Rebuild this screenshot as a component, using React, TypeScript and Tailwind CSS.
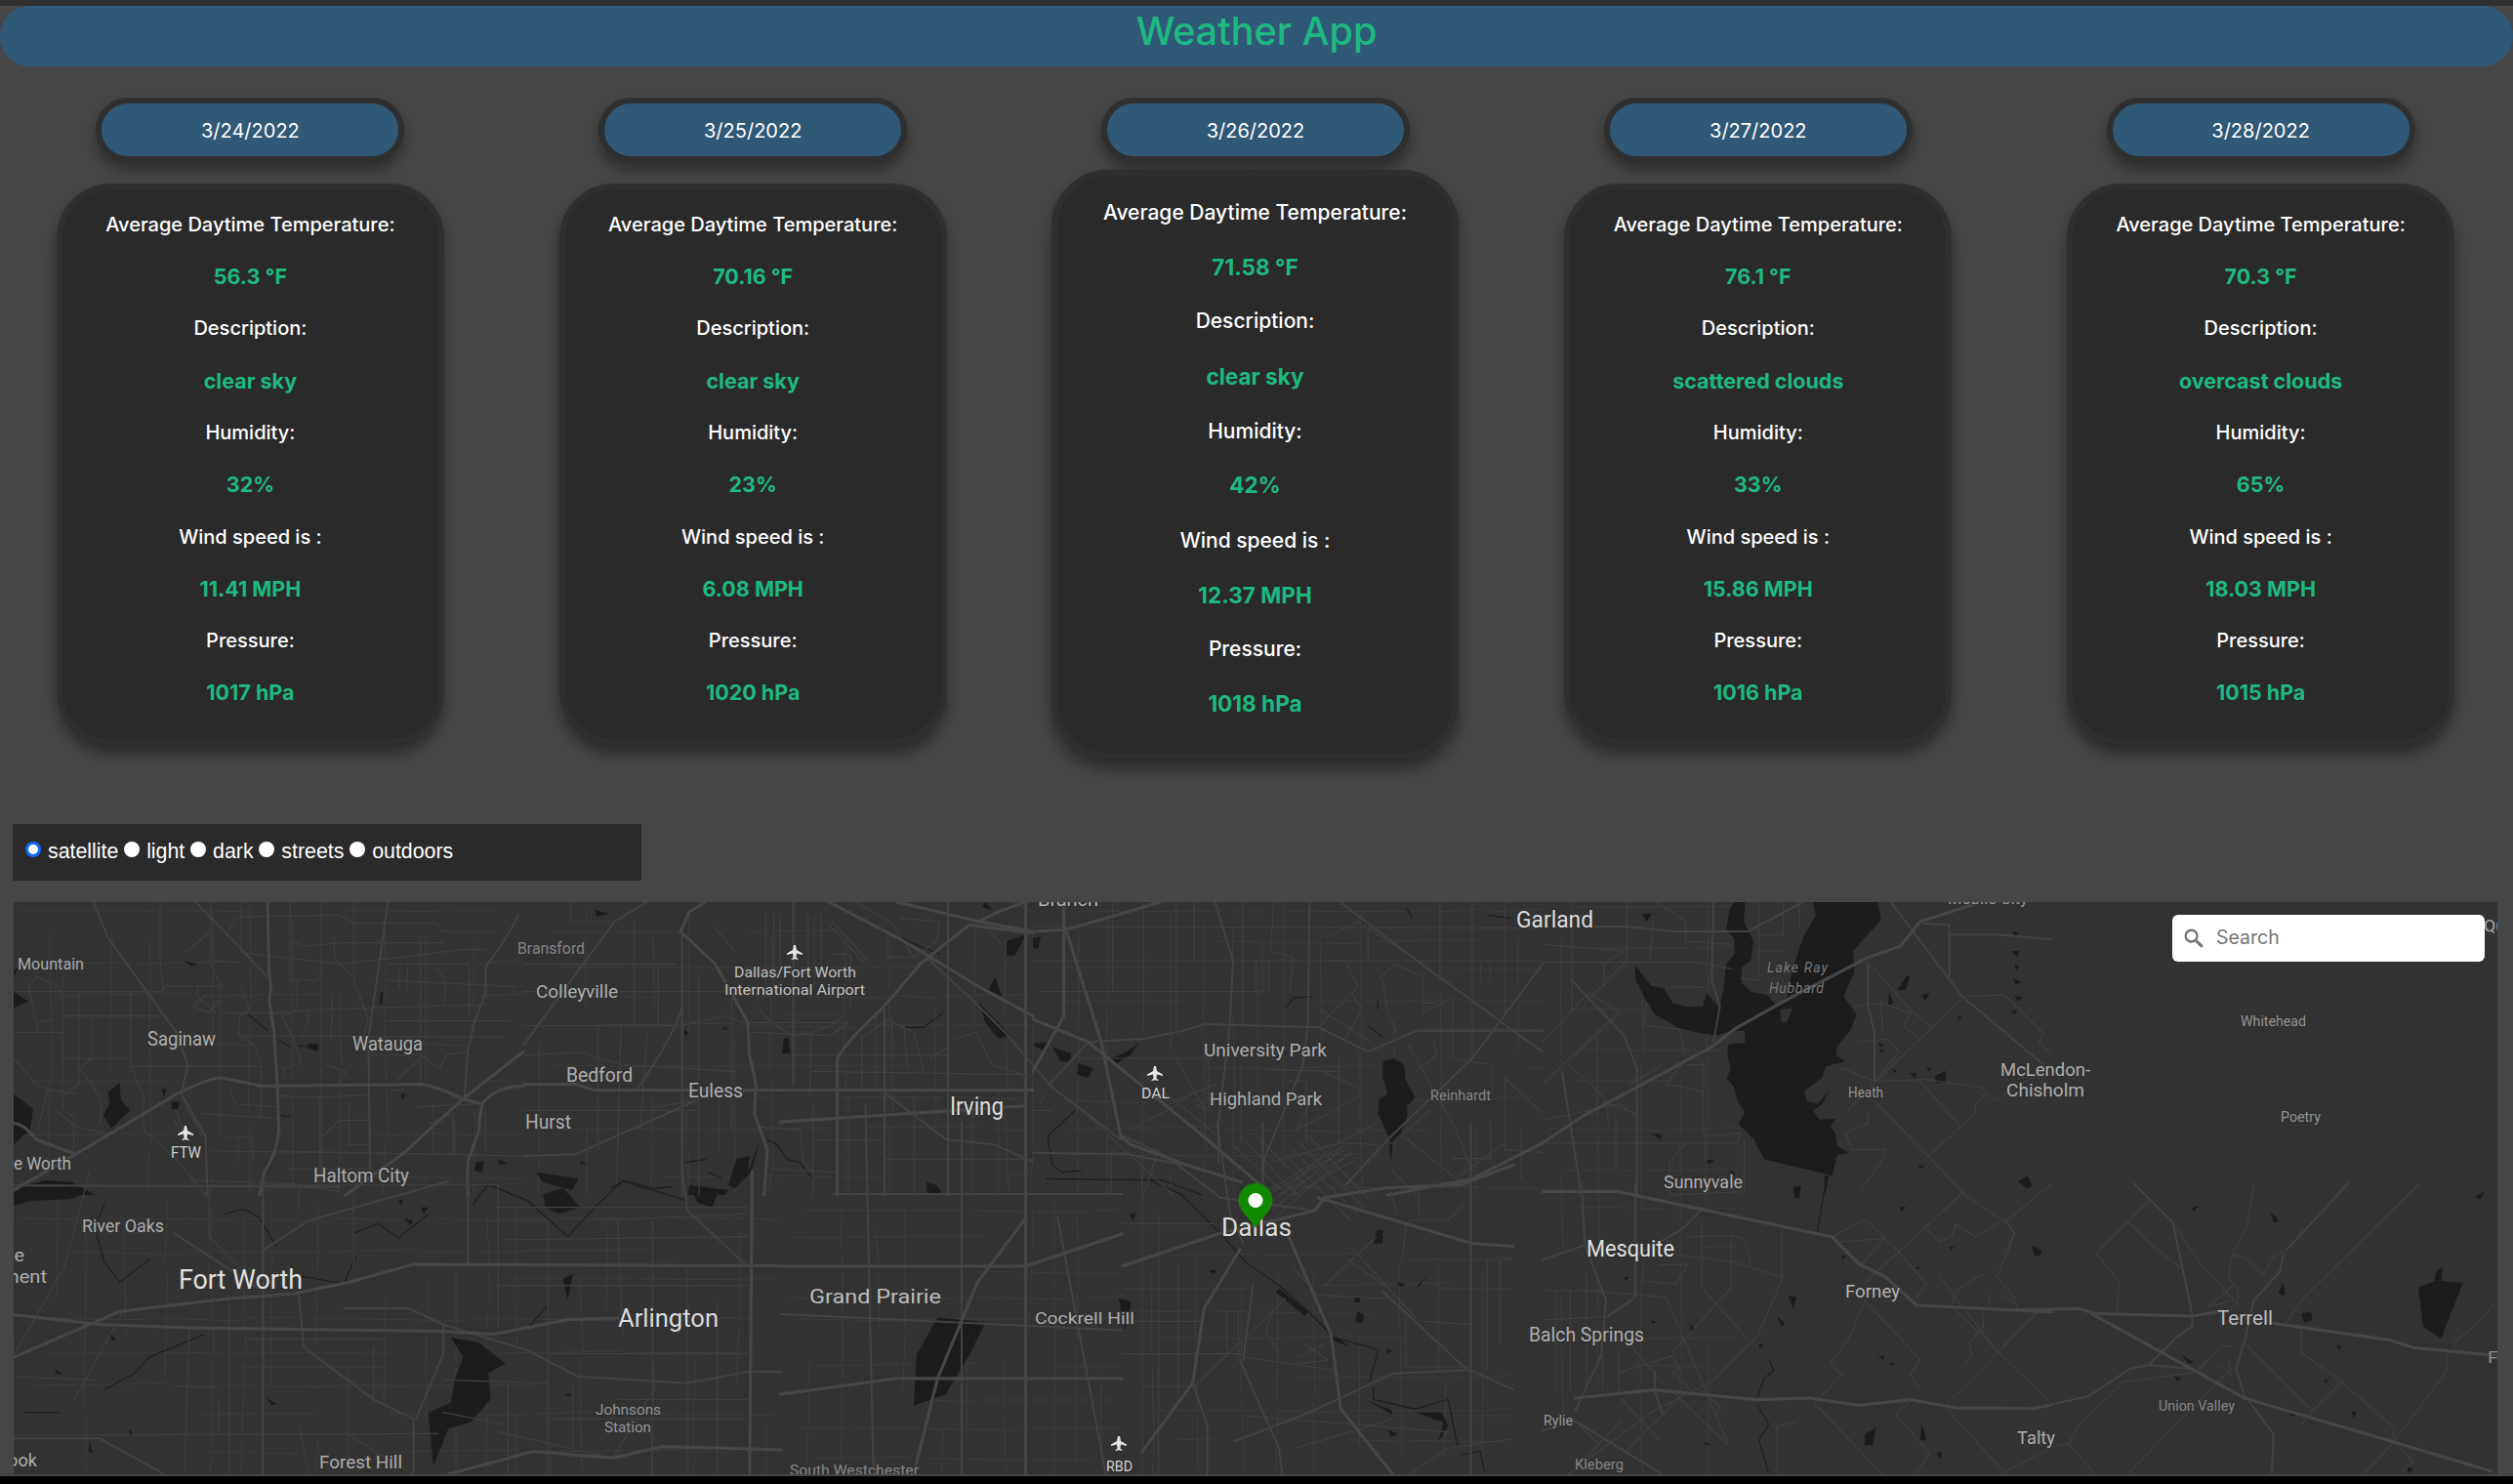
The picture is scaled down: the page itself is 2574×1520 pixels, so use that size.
import React from "react";

type Day = { date: string; temp: string; desc: string; hum: string; wind: string; pres: string };
const days: Day[] = [
  { date: "3/24/2022", temp: "56.3 °F", desc: "clear sky", hum: "32%", wind: "11.41 MPH", pres: "1017 hPa" },
  { date: "3/25/2022", temp: "70.16 °F", desc: "clear sky", hum: "23%", wind: "6.08 MPH", pres: "1020 hPa" },
  { date: "3/26/2022", temp: "71.58 °F", desc: "clear sky", hum: "42%", wind: "12.37 MPH", pres: "1018 hPa" },
  { date: "3/27/2022", temp: "76.1 °F", desc: "scattered clouds", hum: "33%", wind: "15.86 MPH", pres: "1016 hPa" },
  { date: "3/28/2022", temp: "70.3 °F", desc: "overcast clouds", hum: "65%", wind: "18.03 MPH", pres: "1015 hPa" },
];

function Row({ text, value }: { text: string; value?: boolean }) {
  return value ? (
    <div className="flex h-[53.33px] shrink-0 items-center justify-center text-[21.5px] font-bold text-[#1eb981]">{text}</div>
  ) : (
    <div className="flex h-[53.33px] shrink-0 items-center justify-center text-[20px] font-medium text-white">{text}</div>
  );
}

function Column({ d, active }: { d: Day; active: boolean }) {
  const card =
    "h-[575px] w-[397px] rounded-[56px] border-[6px] border-[#2f2f2f] bg-[#2a2a2a] pt-[9px] shadow-[0_9px_14px_rgba(0,0,0,0.4)]";
  return (
    <div className="flex flex-col items-center">
      <div className="flex h-[66px] w-[316px] items-center justify-center rounded-full border-[6px] border-[#2f2f2f] bg-[#305877] pt-[2px] text-[20px] font-normal text-white shadow-[0_8px_14px_rgba(0,0,0,0.35)]">
        {d.date}
      </div>
      <div className={active ? card + " mt-[22px] scale-[1.05]" : card + " mt-[22px]"}>
        <Row text="Average Daytime Temperature:" />
        <Row text={d.temp} value />
        <Row text="Description:" />
        <Row text={d.desc} value />
        <Row text="Humidity:" />
        <Row text={d.hum} value />
        <Row text="Wind speed is :" />
        <Row text={d.wind} value />
        <Row text="Pressure:" />
        <Row text={d.pres} value />
      </div>
    </div>
  );
}

type Layer = { o: [number, number]; s: [number, number]; maj?: string[]; mid?: string[]; min?: string[]; riv?: string[]; wat?: string[] };

const layers: Layer[] = [
  {
    o: [0, 0], s: [1.6416, 1.6416],
    maj: ["M487 790 L640 790 L700 770", "M487 700 L640 690", "M640 560 L640 920", "M570 920 L585 860 L610 800 L640 760", "M487 870 L560 860 L700 860"],
    mid: ["M520 745 L700 745", "M540 690 L545 920", "M600 700 L600 920", "M487 820 L700 830", "M660 760 L690 920"],
    wat: ["M585 822 L615 825 L605 845 L590 870 L570 877 L572 845 Z", "M698 810 L706 812 L702 830 Z"],
  },
  {
    o: [14, 924], s: [1 / 3, 1 / 3],
    maj: ["M780 0 L785 220 Q795 260 785 300 L800 400 L810 560 L815 700 Q810 770 770 830 L755 900", "M0 885 L190 775 L500 590 Q600 540 640 540 L760 565 L1250 560 Q1300 565 1380 605 L1440 620 Q1430 660 1430 700 L1395 800 L1395 900", "M1566 565 Q1480 565 1440 620", "M1566 460 L1380 605 L1200 770 L1020 900", "M0 680 Q30 680 70 730 L190 775"],
    mid: ["M560 0 L700 145 L780 230", "M1150 0 L1090 420 L1095 820", "M245 0 L290 110 L500 400 L535 500 L515 590 L590 720 L595 900", "M1550 40 Q1530 90 1450 200 L1450 280 L1415 370 L1395 460 L1385 605", "M0 870 L1000 875"],
    min: ["M150 220 L150 640 L185 660 L185 760", "M0 275 L450 275 L470 258 L635 258 L635 710", "M150 350 L450 350", "M360 280 L360 505 L400 600 L400 700 L500 790 L590 900", "M0 400 L150 400 L150 480 L360 480", "M240 350 L240 480 L200 510 L240 560 L270 610 L265 680", "M200 280 L200 560 L155 590", "M360 505 L760 505 L760 660", "M0 480 L70 560 L105 575 L190 590", "M105 575 L75 700", "M130 640 L190 690 L280 710", "M580 650 L810 665", "M635 340 L810 340 L940 330 L1100 325 L1450 315", "M700 260 L725 330 L695 350 L690 410 L740 440 L760 500", "M690 410 L1500 415", "M600 180 L640 260", "M605 0 L605 180 L700 185", "M600 95 L525 155", "M450 0 L450 180 L460 270", "M685 45 L660 90 M685 45 L1000 40 L1050 65 L1300 65 L1315 90 L1480 90", "M700 0 L700 155 L1000 190 L1190 170 L1380 145 L1450 145", "M850 0 L850 240 L935 240 L945 210 M850 120 L900 135 L1000 125 L1320 125", "M945 0 L945 880", "M1045 0 L1045 240 L1090 360 L1070 430 M985 100 L985 170 L1040 230", "M1150 190 L1400 190 L1400 350 M1150 240 L1545 260 M1185 195 L1185 265 M1210 195 L1210 270 M1250 100 L1250 570 M1300 200 L1325 240 L1325 315", "M1150 365 L1520 365", "M870 240 L870 330 L825 350 L860 420 L885 495 L830 510 L830 540", "M980 280 L975 420 M905 330 L905 370 L880 415", "M820 595 L890 600 L1045 595 L1090 590", "M940 600 L940 880 M1030 615 L1030 745 L1095 745", "M660 560 L680 620 L810 630", "M655 720 L735 720 L735 800 M690 720 L690 800 M610 765 L1400 775", "M1095 470 L1250 470 L1310 510 L1330 470 L1390 460", "M1180 545 L1250 480", "M1230 630 L1420 620 M1290 620 L1290 770", "M810 765 L1560 780", "M940 730 L1000 670 L1095 670 L1095 745", "M840 820 L1100 820", "M545 855 L850 865 L1000 890", "M45 260 L70 230 L130 255 L150 280 M45 260 L60 330 L75 395 M75 370 L125 358", "M565 260 L565 290 L620 340 M550 320 L590 285 M635 300 L600 340 L550 320", "M500 640 L525 720 M530 630 L580 720 M495 670 L520 740", "M960 500 L1020 520 L1000 560 M1200 575 L1160 580 M1280 680 L1350 650 L1350 770 M1355 675 L1355 770 M1450 640 L1450 760"],
    riv: ["M720 345 L780 395 M815 425 L850 445 M875 440 L930 450 M820 655 L850 660"],
    wat: ["M0 210 L15 200 L0 232Z", "M0 275 L45 305 L0 325Z", "M0 590 L60 635 L50 700 L0 745Z", "M290 585 L325 555 L330 610 L358 640 L300 695 L275 655 L295 620Z", "M520 180 L565 190 L545 195Z", "M455 575 L470 572 L462 598Z", "M485 615 L510 612 L505 635 L485 635Z", "M1128 280 L1136 275 L1130 318 L1124 310Z", "M1190 590 L1205 588 L1195 608Z", "M0 880 L100 855 L180 860 L250 900 L0 900Z", "M1420 800 L1445 795 L1440 830 L1415 825Z", "M1490 790 L1520 805 L1490 805Z", "M905 435 L935 435 L935 458 L905 450Z"],
  },
  {
    o: [536, 924], s: [1 / 3, 1 / 3],
    maj: ["M483 90 L590 190 L690 370 L695 470 L715 560 L710 650 L750 760 L740 900", "M483 90 L510 30 L560 0", "M0 560 L160 560 L220 578 L690 578 L800 578 L1566 578", "M965 900 L965 480 Q990 430 1100 330 L1220 190 L1370 70 L1566 95", "M940 0 L1170 120 L1400 260 L1566 350", "M1150 0 L1400 60 L1566 90 M1400 60 L1460 30 L1540 0"],
    mid: ["M1240 170 L1390 310 L1480 400 L1566 500", "M830 0 L830 560", "M0 780 L160 775 L530 610", "M0 440 L280 60 L380 0", "M488 320 Q470 400 350 575", "M488 100 L488 900", "M1110 330 L1110 900", "M1305 0 L1305 900", "M1110 585 L1300 730 L1450 745 L1566 800"],
    min: ["M0 190 L470 190 M0 275 L620 275 M0 380 L480 380 L620 350 L690 375 M0 470 L180 462 L300 500 L650 520", "M145 0 L145 60 L280 60 M230 380 L230 760 M340 50 L340 370 M300 380 L290 760 M415 190 L415 380 M400 630 L540 610", "M540 220 L540 900 M640 300 L640 700 M600 580 L600 760 M380 400 L360 700 M0 640 L540 640", "M680 370 L850 370 L1000 370 L940 410 L700 400 M885 410 L880 590 M960 400 L1000 370", "M830 470 L1300 470 M890 520 L1566 530 M890 620 L890 900 M1000 590 L1000 900 M1200 590 L1200 900 M1050 690 L1400 690 M1380 600 L1380 900 M1460 580 L1460 900 M1110 790 L1566 790 M890 730 L1100 730", "M720 690 L850 700 L860 800 L890 830 M760 820 L960 830", "M1040 420 L1120 360 L1200 400 L1230 520 M1040 410 L1040 560 M1085 350 L1085 570 M1130 350 L1140 480 M1170 380 L1180 510 M1250 480 L1310 440", "M1120 100 L1120 170 L1200 170 L1130 60 L1020 0 M1160 50 L1280 60 L1270 120 L1200 170", "M1330 420 L1390 400 L1440 500 L1566 540 M1500 0 L1566 30 M1430 90 L1470 130", "M745 40 L745 260 M770 40 L770 260 M790 40 L790 230 M875 40 L875 230 M895 40 L895 260 M915 40 L915 230", "M585 75 L650 150 M955 160 L1005 160 L1005 320 M950 60 L1060 180 M940 70 L1050 190", "M720 320 Q750 370 830 410 Q930 400 980 350 M800 345 L960 345"],
    riv: ["M750 730 L780 745 L810 790 L850 800 L890 850", "M270 880 L310 855 L400 880 L460 875", "M1150 100 L1180 120 L1280 160", "M1170 385 L1230 385 L1290 340", "M500 800 L560 790", "M570 830 L610 850"],
    wat: ["M655 790 L695 780 L690 830 L725 740 L700 830 L650 880 L630 870Z", "M510 870 L630 885 L620 900 L505 900Z", "M1400 310 L1460 370 L1495 410 L1460 420 L1420 370Z", "M1485 120 L1545 100 L1510 165 L1485 165Z", "M800 420 L815 415 L820 465 L795 465Z", "M1240 860 L1270 870 L1290 900 L1240 900Z", "M40 830 L170 850 L150 885 L60 860Z", "M220 25 L265 35 L225 45Z", "M495 390 L510 405 L495 410Z", "M615 382 L630 392 L612 390Z", "M1420 0 L1440 25 L1410 15Z", "M1450 230 L1470 290 L1430 270Z", "M175 795 L195 805 L175 805Z"],
  },
  {
    o: [1058, 924], s: [1 / 3, 1 / 3],
    maj: ["M95 0 L95 350 L0 520", "M0 90 L100 85 L240 45 L390 0", "M100 80 L210 430 L270 720 L300 745 L480 810 L640 860", "M0 360 L170 430 L500 700 L700 870", "M1566 740 L1350 850 L1090 900"],
    mid: ["M0 500 L60 570 L270 730", "M170 430 L50 560", "M170 430 L340 420 L460 395 L530 375 L880 385 L1030 460 L1180 395 L1566 395", "M560 0 L615 180 L605 380 L570 680 L570 800", "M945 0 L1180 180 L1400 340 L1566 460", "M850 0 L845 380 L830 500 L710 790 L705 870", "M1566 190 L1350 480 L1100 720 L960 870", "M0 770 L290 775 L480 810"],
    min: ["M0 75 L1566 80 M0 180 L1566 180 M20 275 L700 275 M140 480 L550 480 M440 0 L440 400 M340 0 L340 390 M245 0 L245 270 M140 100 L140 350 M495 0 L495 180", "M645 0 L645 380 M685 180 L685 280 M705 130 L705 280 M725 180 L725 280 M740 0 L730 150 L800 170 L790 270", "M900 110 L1000 60 L1150 160 M900 180 L960 180 L1000 260 L880 380 M980 280 L1010 330 L960 420 M880 330 L1040 430 M1030 80 L1030 190", "M1060 240 L1110 190 L1200 230 L1200 340 L1280 300 M1075 240 L1090 340 L1120 400 M1350 0 L1350 480 M1450 0 L1450 350 M1250 0 L1250 230 M1375 190 L1375 240 M1405 190 L1405 240 M1200 310 L1240 310", "M1290 300 L1290 480 L1410 500 L1410 600 M1150 430 L1300 700 L1350 830 M1230 420 L1240 470 L1180 520 M1450 540 L1566 650 M1450 540 L1450 760 M1500 690 L1500 850", "M440 480 L530 640 L500 620 M540 480 L540 640 M640 500 L640 740 M720 515 L930 520 M780 550 L840 550 L840 740 M890 520 L1000 570 M940 480 L940 740 M850 620 L810 700 L1000 600", "M730 800 L940 740 L1060 745 L1050 790 M700 900 L950 750 M720 900 L960 760 M760 900 L980 770 M800 900 L1010 780 M620 750 L780 900 M650 730 L810 900 M680 710 L850 880", "M240 780 L240 900 M380 780 L340 900 M130 620 L430 900 M340 530 L570 720 M420 620 L560 560 M300 700 L450 620 M20 620 L40 590 M0 640 L60 640", "M1140 720 L1240 800 L1300 850 L1450 740 M1100 820 L1180 900 M1220 640 L1130 720 M1450 760 L1566 770"],
    riv: ["M775 325 L800 295 L860 290", "M1030 380 L1075 415", "M45 720 L130 640 M45 720 L60 810 L90 830 L150 825 M40 850 L400 855 L520 900", "M1150 20 L1165 50", "M1400 40 L1470 50", "M1060 300 L1058 330"],
    wat: ["M1075 490 L1110 480 L1140 500 L1145 545 L1175 600 L1150 625 L1150 660 L1130 710 L1100 740 L1070 670 L1060 650 L1065 605 L1090 590 L1075 540Z", "M1095 745 L1105 745 L1100 805Z", "M238 480 Q280 470 325 432 L300 470 L250 500Z", "M60 445 L115 465 L120 490 L85 490Z", "M140 495 L185 510 L170 540 L135 530Z", "M0 110 L25 105 L15 145 L0 140Z", "M0 435 L45 430 L40 460 L10 445Z"],
  },
  {
    o: [1580, 924], s: [1 / 3, 1 / 3],
    maj: ["M0 740 L120 660 L520 445 L590 390 L750 300 L1000 170 L1100 135 L1160 60 L1300 15 L1340 0"],
    mid: ["M160 75 L260 75 L400 90 L630 90 L800 0", "M525 0 L520 240 L545 320 L525 430", "M60 520 L110 840 L115 900", "M1070 0 L1290 290 L1540 500", "M1170 65 L1250 70 L1250 230 M1250 100 L1400 100 L1566 115", "M1000 190 L1000 320 L1020 400 L1020 550", "M90 240 L250 410 L290 510 L290 900"],
    min: ["M0 185 L480 185 L580 205 M90 0 L90 340 M0 130 L250 150 L190 190 L190 260 M350 0 L440 60 L440 120 L580 130 M260 0 L260 180 L130 310 M330 180 L340 60", "M610 235 L665 240 L665 0 M665 100 L740 100 L740 0 M665 150 L740 150 M790 0 L790 80 M395 260 L500 262 M0 430 L140 280 L240 340 L100 470 M0 560 L230 340 M80 500 L170 580 L200 620 L290 650", "M320 310 L310 380 L420 390 L440 480 L380 560 L490 580 L500 800 M445 500 L495 500 L495 590 M290 540 L270 560 L370 500", "M0 670 L240 620 L290 660 M195 620 L205 690 M225 670 L225 820 M0 740 L600 740 L610 710 L500 720 M390 800 L440 740 M390 800 L390 900 L620 890 L620 730", "M1015 200 L1130 330 L1190 380 M960 320 L1040 310 L1130 340 L1110 380 L1160 420 M1040 300 L1045 410 M1285 300 L1020 555 L940 640 M1000 640 L1000 680 L930 710 L950 760 L1055 760 L1040 800 L980 880", "M970 430 L1060 420 L1095 460 L1020 550 L920 510 M1030 550 L1180 545 L1350 570 L1390 610 L1566 500 M1160 550 L1280 685 M1360 590 L1330 620 L1330 650 L1185 780 M1020 610 L1300 900 M1285 290 L1420 285 L1540 405 L1525 430 L1566 470"],
    wat: ["M830 0 L1030 0 L1040 55 L990 110 L955 150 L958 215 L925 290 L965 345 L945 395 L905 445 L902 470 L930 490 L870 505 L860 540 L805 580 L812 612 L845 620 L880 580 L860 620 L832 640 L850 668 L900 665 L885 690 L900 712 L905 750 L940 770 L905 778 L890 840 L680 790 L650 730 L602 682 L622 645 L598 610 L590 570 L565 540 L578 515 L568 470 L570 438 L622 432 L620 395 L580 395 L535 410 L470 400 L415 385 L345 345 L312 290 L285 235 L285 195 L335 258 L372 265 L400 310 L445 322 L492 322 L505 280 L542 325 L555 275 L565 190 L590 160 L590 115 L565 80 L575 20 L590 0 L622 0 L618 60 L648 120 L640 180 L612 200 L612 250 L640 275 L690 285 L720 320 L750 290 L770 200 L800 110 L840 40Z", "M1120 225 L1128 230 L1115 270 L1090 270Z", "M1065 275 L1078 310 L1062 318Z", "M1165 285 L1190 280 L1175 305Z", "M1440 150 L1465 150 L1460 168Z", "M1450 190 L1465 200 L1455 208Z", "M1445 235 L1470 245 L1455 255Z", "M1450 288 L1475 292 L1460 305Z", "M1440 330 L1460 335 L1450 345Z", "M1445 88 L1465 95 L1450 105Z", "M1205 535 L1240 518 L1238 555 L1210 555Z", "M1130 525 L1150 525 L1145 545Z", "M1180 505 L1195 515 L1185 520Z", "M1075 512 L1090 518 L1080 525Z", "M1275 350 L1290 355 L1280 362Z", "M1030 435 L1050 435 L1040 445Z", "M1035 450 L1050 460 L1040 462Z", "M1460 860 L1490 840 L1505 870 L1490 880Z", "M1155 810 L1175 808 L1160 820Z", "M335 710 L365 715 L362 730Z", "M500 795 L530 790 L515 805Z", "M570 820 L590 830 L590 840Z", "M770 880 L795 875 L790 900 L775 900Z", "M305 35 L335 35 L320 60Z", "M865 840 L880 840 L868 900Z"],
  },
  {
    o: [1580, 1212], s: [1 / 3, 1 / 3],
    maj: ["M0 25 L230 25 L890 165 L975 250 L1050 285 L1150 375 L1566 395", "M100 660 L340 635 L660 665 L820 660 L970 682 L1130 665 L1270 690 L1510 692 L1566 680"],
    mid: ["M120 0 L130 190 L195 360 L180 530 L100 700", "M0 235 L130 190", "M285 0 L285 350 L200 410", "M0 760 L100 730 L370 895", "M345 580 L345 640 L370 710", "M490 80 L430 140 L290 220"],
    min: ["M735 135 L735 300 L660 470 L520 610 L340 700 L70 900 M410 220 L580 240 L740 290", "M580 160 L620 170 L640 250 M490 120 L490 320 L640 490 M580 165 L580 320 L400 520 M440 165 L580 160 M310 240 L310 300 L410 310 L445 250 L360 250 M380 350 L570 800 M130 330 L380 350 M0 330 L190 330 M0 420 L195 410", "M40 330 L40 630 M85 330 L85 630 M135 280 L135 630 M185 530 L185 630 M235 510 L235 640 M240 580 L400 530 L420 570 L400 580 L450 630", "M280 510 L350 590 L420 660 L570 805 M240 660 L360 790 M100 730 L170 800 M240 730 L100 880 M430 650 L250 830 M490 640 L550 690 L535 710", "M890 165 L990 110 L1095 210 L1180 310 M915 180 L1050 170 L980 250 M1290 30 L1095 210 L990 305 M1180 310 L1150 350 M1215 280 L1400 520 M990 360 L940 480 L885 550 L920 590 L850 660 M990 360 L1140 520 L1160 540 L1130 590 L1160 630", "M780 735 L720 745 L720 900 M835 675 L1050 900 M1130 670 L1085 710 L1190 830 L1140 900 M1180 140 L1220 180 L1260 160 L1270 125 L1330 165 L1420 110 L1450 150 L1430 210 L1395 290 M1350 280 L1270 330 L1255 380 M1400 290 L1455 360 M1370 340 L1375 380 M1350 380 L1355 440 L1310 490 L1320 530 L1300 550 M1230 680 L1420 890 M1520 395 L1400 520 L1240 680 M1265 385 L1566 680 M1290 30 L1420 120 L1566 0"],
    riv: ["M870 0 L845 145", "M660 680 L695 740 L665 790 L695 890", "M695 540 L710 575 L680 600 L660 660"],
    wat: ["M772 10 L790 8 L790 45 L775 45Z", "M1095 75 L1115 70 L1105 88Z", "M920 220 L935 222 L920 235Z", "M755 345 L780 350 L770 385Z", "M720 410 L745 430 L735 440Z", "M665 495 L680 495 L668 510Z", "M250 290 L268 285 L255 300Z", "M330 420 L350 425 L340 432Z", "M455 430 L468 450 L455 455Z", "M990 770 L1025 750 L1015 805 L990 805Z", "M1165 740 L1180 790 L1160 790Z", "M1210 830 L1225 825 L1225 850Z", "M1030 535 L1050 530 L1048 542Z", "M1065 550 L1085 555 L1070 560Z", "M490 795 L515 800 L510 806Z", "M1505 195 L1535 210 L1525 225 L1510 220Z", "M1250 195 L1265 195 L1255 205Z", "M1145 260 L1165 255 L1150 265Z"],
  },
  {
    o: [2052, 1212], s: [1 / 3, 1 / 3],
    maj: ["M0 390 L230 385 L280 400 L580 408 L660 395", "M830 430 L1190 482 L1260 505 L1520 530", "M270 400 L740 660 L1200 795 L1500 885"],
    mid: ["M0 690 L100 690 L260 655 L390 570 L450 558 L570 570", "M580 408 L580 440 L530 475 L450 555", "M520 120 L580 400", "M860 220 L850 270 L770 360 L745 470 L715 570 L740 650 L830 770 L825 890", "M1060 0 L870 205", "M400 0 L520 120"],
    min: ["M520 120 L600 240 L700 350 L715 370 M450 50 L285 215 L355 300 L350 400 M385 120 L450 185 L545 260 M770 0 L750 130 L705 215 L690 290 L720 320 L720 380 M705 220 L745 230 L800 280 M800 280 L830 225 L870 205", "M710 310 L630 380 M630 380 L700 360 M1280 0 L915 360 L870 430 M915 450 L915 520 L1040 610 L1200 750 L1200 795 L1360 580 L1365 520 M1515 365 L1445 440 L1390 485 L1385 510", "M1040 610 L940 710 L920 740 M740 490 L950 700 M700 570 L385 890 M640 530 L590 580 L370 610 L230 745 L200 800 L280 890 M200 800 L150 810 L0 890 M1200 795 L1110 890 M1200 795 L1260 855 L1220 890", "M695 500 L665 500 L600 580 M665 560 L700 590 L690 540 M0 110 L35 155 L0 220 M0 350 L40 370 L40 385 M100 400 L0 500 M100 690 L0 690"],
    wat: ["M1275 320 L1325 300 L1330 270 L1350 258 L1345 300 L1412 305 L1395 350 L1375 400 L1345 478 L1290 440Z", "M845 340 L860 302 L865 345Z", "M915 400 L945 395 L950 420 L925 428Z", "M820 90 L840 105 L845 120 L830 120Z", "M90 190 L120 210 L100 225Z", "M580 75 L600 68 L585 88Z", "M1450 40 L1480 25 L1465 50Z", "M560 535 L585 550 L570 555 L545 525Z", "M525 590 L545 600 L535 610Z", "M985 605 L1000 600 L990 615Z", "M1025 500 L1035 495 L1035 515Z", "M1070 700 L1085 705 L1075 722Z", "M1240 870 L1258 880 L1245 892Z", "M880 705 L900 712 L885 718Z"],
  },
  {
    o: [1150, 1150], s: [1 / 3, 1 / 3],
    maj: ["M0 440 L120 400 L300 340 L590 270 L620 230 L810 200 L1040 190 L1200 130", "M510 350 L640 650 L670 880 L830 1080", "M360 390 L250 570 L215 800 L60 1010", "M600 230 L870 310 L1070 370 L1200 380"],
    mid: ["M430 0 L430 200", "M290 0 L330 280 L370 370", "M0 40 L130 100 L300 230 L590 270", "M215 800 L260 930 L260 1080", "M360 730 L480 1000 L490 1080", "M660 850 L830 770 L1070 760 L1200 820", "M340 980 L550 900 L660 850", "M1070 0 L1070 1080", "M800 520 L1070 770", "M400 500 L370 730"],
    min: ["M60 100 L60 1080 M110 280 L110 1080 M170 430 L170 850 M0 310 L280 310 M0 510 L400 510 M0 610 L250 610 M0 710 L370 710 M60 810 L220 810 L500 540 M320 580 L320 720 M355 580 L355 720", "M440 260 L650 70 L780 0 M460 270 L670 80 M480 280 L690 100 M500 100 L700 300 M520 80 L720 280 M540 60 L740 260 M570 40 L760 240", "M520 440 L600 530 L810 540 M620 500 L780 350 M690 420 L820 510 M880 420 L1200 420 M870 310 L860 420 M970 430 L970 760 M870 600 L870 750 L1070 750 M970 510 L1200 510 M1120 420 L1120 760 M1160 420 L1160 680 M930 610 L1070 620", "M370 900 L1000 950 M560 680 L630 730 L540 740 M370 720 L650 760 M460 580 L440 640 L480 710 M700 380 L900 600 M540 720 L620 680", "M530 1000 L700 950 L830 910 M880 1080 L1000 1000 L1200 970 M1070 900 L1200 900 M880 300 L1000 300 L1050 250 M820 200 L840 270 M910 200 L910 280 M1010 110 L1130 110 M1130 0 L1130 110"],
    riv: ["M0 175 L80 175 L180 220 L300 340 L380 430 L480 500 L560 570 L620 630 L650 660 L760 690 L785 700 L760 790", "M770 810 L770 850 L900 880 L1000 850 L1030 1000", "M1040 1020 L1100 1010 L1110 1070"],
    wat: ["M480 510 L570 580 L560 595 L470 520Z", "M780 330 L800 330 L798 370 L772 372Z", "M710 535 L730 535 L728 552 L712 552Z", "M720 580 L742 590 L735 615 L715 612Z", "M810 695 L828 700 L815 712Z", "M845 490 L870 495 L850 505Z", "M905 500 L935 470 L910 505Z", "M900 890 L980 890 L1000 930 L970 980 L985 920Z", "M755 855 L830 885 L825 895Z", "M815 945 L845 955 L825 965Z", "M20 280 L40 280 L30 300Z", "M265 455 L290 450 L280 465Z", "M820 10 L855 0 L825 60 Z", "M640 655 L660 660 L700 690 L650 670Z"],
  },
  {
    o: [0, 1200], s: [1 / 1.96, 1 / 3],
    maj: ["M28 570 L240 430 L460 390 L590 375 L700 340 L830 285 L1568 290", "M28 440 L200 470 L380 480 L600 485 L880 490 L990 500 L1140 455 L1240 450", "M900 930 L1070 860 L1230 880 L1330 845 L1568 855", "M1510 0 L1505 930"],
    mid: ["M528 0 L528 930", "M940 0 L940 280", "M28 820 L200 820 L330 930", "M600 380 L610 540 L750 700 L830 760 L830 930", "M690 420 L820 420 L890 470 L1060 550 L1160 630 L1380 650 L1500 615 L1568 615", "M890 470 L890 560 L835 760", "M1370 0 L1380 120 L1500 290", "M350 190 L450 290 L530 370", "M530 240 L620 150 L900 30"],
    min: ["M28 45 L1000 40 M420 40 L420 200 L530 370 M600 50 L600 120 M710 60 L710 300 M130 290 L30 560 M180 0 L130 290 M250 420 L150 700 M28 630 L190 640 M380 480 L370 930 M460 380 L460 930", "M620 660 L830 660 M490 600 L770 600 M490 515 L770 515 M600 780 L620 930 M690 800 L830 930 M750 540 L750 700 M890 640 L1100 650 M28 810 L880 805 M440 700 L440 800 M360 660 L440 660", "M1000 40 L1000 500 M1100 150 L1100 930 M1240 150 L1250 500 M1310 150 L1310 930 M1380 300 L1380 930 M1060 240 L1300 240 M1000 210 L1500 200 M1000 350 L1500 350 M1100 560 L1500 560 M1020 650 L1020 930 M1150 660 L1150 860 M1440 400 L1440 930 M890 740 L1020 780", "M1200 150 L1500 130 M1000 150 L1100 150 M1000 110 L1500 110 M1100 760 L1500 760 M1000 800 L1230 880 M1320 650 L1230 880 M1240 700 L1500 700"],
    riv: ["M450 130 L490 115 L520 140 L555 230", "M210 100 L190 170 L210 280 L240 340 L300 270", "M710 190 L760 160 L800 205 L860 130", "M950 100 L980 40 L1060 90 L1140 200 L1200 100 L1250 30 L1380 90", "M410 500 L300 570 L270 620 L210 670", "M50 740 L120 740", "M600 320 L690 345 L715 260", "M1060 480 L1100 410"],
    wat: ["M28 50 L100 30 L175 65 L140 85 L60 90 L28 105Z", "M905 510 L960 525 L1015 590 L980 620 L985 700 L945 770 L900 790 L870 905 L860 740 L905 710 L915 630 L930 570Z", "M1090 70 L1130 50 L1165 110 L1120 130 L1095 110Z", "M1385 40 L1440 70 L1430 110 L1400 95Z", "M810 145 L830 150 L825 165Z", "M845 110 L860 110 L850 130Z", "M800 90 L810 85 L805 105Z", "M1130 330 L1150 315 L1140 395Z", "M220 495 L232 515 L225 520Z", "M535 695 L555 715 L545 718Z", "M110 605 L125 625 L112 620Z", "M1140 680 L1150 690 L1135 690Z", "M260 790 L268 810 L258 812Z", "M180 830 L186 865 L178 860Z"],
  },
];

// Fine street mesh: short, broken runs of streets over the built-up districts.
const districts: [number, number, number, number, number, number][] = [
  [14, 1224, 800, 1510, 38, 34],
  [800, 1224, 1150, 1510, 30, 30],
  [1150, 1280, 1550, 1510, 38, 36],
  [14, 924, 540, 1224, 52, 44],
  [540, 924, 1058, 1224, 40, 38],
  [1058, 924, 1580, 1224, 36, 34],
  [1580, 924, 1780, 1510, 40, 38],
];

function streetMesh() {
  let seed = 17;
  const rnd = () => {
    seed = (seed * 16807) % 2147483647;
    return seed / 2147483647;
  };
  let d = "";
  for (const [x0, y0, x1, y1, dx, dy] of districts) {
    for (let x = x0 + dx * rnd(); x < x1; x += dx * (0.7 + 0.6 * rnd())) {
      let y = y0 + 40 * rnd();
      while (y < y1) {
        const len = 40 + 110 * rnd();
        if (rnd() > 0.35) d += `M${x.toFixed(0)} ${y.toFixed(0)}L${(x + 6 * (rnd() - 0.5)).toFixed(0)} ${Math.min(y + len, y1).toFixed(0)}`;
        y += len + 5;
      }
    }
    for (let y = y0 + dy * rnd(); y < y1; y += dy * (0.7 + 0.6 * rnd())) {
      let x = x0 + 40 * rnd();
      while (x < x1) {
        const len = 40 + 130 * rnd();
        if (rnd() > 0.35) d += `M${x.toFixed(0)} ${y.toFixed(0)}L${Math.min(x + len, x1).toFixed(0)} ${(y + 6 * (rnd() - 0.5)).toFixed(0)}`;
        x += len + 5;
      }
    }
  }
  return d;
}
const mesh = streetMesh();

type L = [string, number, number, number, number, string, number?];
const labels: L[] = [
  ["Mountain", 18, 86, 993, 17, "#aaaaaa"], ["Saginaw", 151, 221, 1071, 20, "#aeaeae"], ["Watauga", 361, 433, 1076, 20, "#aeaeae"],
  ["FTW", 175, 206, 1186, 16, "#d0d0d0"], ["e Worth", 14, 73, 1198, 19, "#aeaeae"], ["Haltom City", 321, 419, 1211, 20, "#aeaeae"],
  ["Bransford", 530, 599, 977, 16, "#858585"], ["Colleyville", 549, 633, 1022, 19, "#aeaeae"], ["Bedford", 580, 648, 1108, 21, "#aeaeae"],
  ["Euless", 705, 761, 1124, 20, "#aeaeae"], ["Hurst", 538, 585, 1156, 20, "#aeaeae"], ["Dallas/Fort Worth", 752, 877, 1001, 15.5, "#c0c0c0"],
  ["International Airport", 742, 886, 1019, 15.5, "#c0c0c0"], ["Irving", 973, 1028, 1142, 25, "#dcdcdc"], ["Branch", 1063, 1125, 928, 19, "#aeaeae"],
  ["University Park", 1233, 1359, 1082, 19, "#aeaeae"], ["Highland Park", 1239, 1354, 1132, 19, "#aeaeae"], ["DAL", 1169, 1198, 1125, 15, "#d0d0d0"],
  ["Reinhardt", 1465, 1527, 1127, 14.5, "#858585"], ["Garland", 1553, 1632, 950, 24, "#dcdcdc"], ["Heath", 1893, 1929, 1124, 14.5, "#949494"],
  ["McLendon-", 2049, 2141, 1102, 19, "#aeaeae"], ["Chisholm", 2055, 2135, 1123, 19, "#aeaeae"], ["Sunnyvale", 1704, 1785, 1217, 18, "#aeaeae"],
  ["Mobile City", 1995, 2077, 926, 16, "#949494"], ["Whitehead", 2295, 2362, 1051, 14.5, "#949494"], ["Poetry", 2336, 2377, 1149, 14, "#949494"],
  ["Mesquite", 1625, 1715, 1287, 24, "#e0e0e0"], ["Balch Springs", 1566, 1684, 1374, 20, "#aeaeae"], ["Rylie", 1581, 1611, 1460, 14.5, "#949494"],
  ["Kleberg", 1613, 1663, 1505, 14, "#858585"], ["Forney", 1890, 1946, 1329, 19, "#b4b4b4"], ["Talty", 2066, 2105, 1479, 18, "#aeaeae"],
  ["Terrell", 2271, 2328, 1357, 20, "#bcbcbc"], ["Union Valley", 2211, 2289, 1445, 14.5, "#858585"], ["Fr", 2548, 2565, 1396, 16, "#949494"],
  ["River Oaks", 84, 168, 1262, 18, "#aeaeae"], ["te", 8, 25, 1292, 18, "#aeaeae"], ["ment", 2, 48, 1314, 18, "#aeaeae"],
  ["Fort Worth", 183, 310, 1320, 27, "#e0e0e0"], ["Arlington", 633, 736, 1359, 25, "#dcdcdc"], ["Johnsons", 610, 677, 1449, 15, "#949494"],
  ["Station", 619, 667, 1467, 15, "#949494"], ["ook", 8, 38, 1502, 18, "#aeaeae"], ["Forest Hill", 327, 412, 1504, 18, "#aeaeae"],
  ["Grand Prairie", 829, 964, 1335, 21, "#bcbcbc"], ["Cockrell Hill", 1060, 1162, 1356, 17, "#aeaeae"], ["Dallas", 1251, 1323, 1266, 26, "#dcdcdc"],
  ["South Westchester", 809, 941, 1511, 14, "#858585"], ["RBD", 1133, 1160, 1507, 15, "#d0d0d0"], ["Qu", 2544, 2566, 954, 17, "#aaaaaa"],
];

const planes: [number, number][] = [[190, 1161], [814, 976], [1183, 1100], [1146, 1479]];

function Plane({ x, y }: { x: number; y: number }) {
  return (
    <path
      transform={`translate(${x - 8} ${y - 8})`}
      d="M7 0 h2 l1 5 l6 3.5 v1.5 l-6 -1.5 l-.6 4 l2 1.5 v1 l-3.4 -.7 l-3.4 .7 v-1 l2 -1.5 l-.6 -4 l-6 1.5 v-1.5 l6 -3.5z"
      fill="#e4e4e4"
    />
  );
}

function MapArt() {
  const scale = (l: Layer) => `translate(${l.o[0]} ${l.o[1]}) scale(${l.s[0]} ${l.s[1]})`;
  return (
    <svg width="2544" height="586" viewBox="14 924 2544 586" className="block">
      <rect x="14" y="924" width="2544" height="586" fill="#323232" />
      <path d={mesh} fill="none" stroke="#3c3c3c" strokeWidth="1" />
      {layers.map((l, i) => (
        <g key={`w${i}`} transform={scale(l)}>
          {(l.wat ?? []).map((d, j) => <path key={j} d={d} fill="#1b1c1b" />)}
          {(l.riv ?? []).map((d, j) => <path key={j} d={d} fill="none" stroke="#1b1c1b" strokeWidth="1.1" vectorEffect="non-scaling-stroke" />)}
        </g>
      ))}
      <g transform="translate(1580 924) scale(.3333)"><path d="M730 330 L770 325 L750 370 L735 370Z" fill="#323232" /></g>
      {layers.map((l, i) => (
        <g key={`r${i}`} transform={scale(l)} fill="none" strokeLinejoin="round" strokeLinecap="round">
          {(l.min ?? []).map((d, j) => <path key={j} d={d} stroke="#3f3f3f" strokeWidth="1.2" vectorEffect="non-scaling-stroke" />)}
          {(l.mid ?? []).map((d, j) => <path key={j} d={d} stroke="#424242" strokeWidth="2" vectorEffect="non-scaling-stroke" />)}
          {(l.maj ?? []).map((d, j) => <path key={j} d={d} stroke="#464646" strokeWidth="3.2" vectorEffect="non-scaling-stroke" />)}
        </g>
      ))}
      {planes.map(([x, y]) => <Plane key={x} x={x} y={y} />)}
      <g className="font-['Roboto',sans-serif]">
        {labels.map(([t, x1, x2, y, size, c, w]) => (
          <text key={t + x1} x={x1} y={y} fontSize={size} fontWeight={w ?? 400} fill={c} textLength={x2 - x1} lengthAdjust="spacingAndGlyphs" stroke="#323232" strokeWidth="2" paintOrder="stroke">{t}</text>
        ))}
        <text x="1810" y="996" fontSize="14" fontStyle="italic" fill="#777777" textLength="62">Lake Ray</text>
        <text x="1812" y="1017" fontSize="14" fontStyle="italic" fill="#777777" textLength="56">Hubbard</text>
      </g>
      <path d="M1286 1258 C1279 1246 1268.500 1240 1268.500 1229.500 A17.500 17.500 0 0 1 1303.500 1229.500 C1303.500 1240 1293 1246 1286 1258Z" fill="#118a00" />
      <circle cx="1286" cy="1229.500" r="7.500" fill="#ffffff" />
    </svg>
  );
}

const styles = ["satellite", "light", "dark", "streets", "outdoors"];

export default function App() {
  return (
    <div className="flex h-[1520px] w-full flex-col overflow-hidden bg-[#464646] font-['Inter',sans-serif]">
      <div className="h-[6px] shrink-0 bg-[#2f2f2f]" />
      <header className="flex h-[62px] shrink-0 justify-center rounded-[31px] bg-[#305877]">
        <h1 className="text-[39.5px] leading-[52px] font-medium text-[#1eb981]">Weather App</h1>
      </header>
      <div className="ml-[-1px] mt-[32px] grid w-full grid-cols-5">
        {days.map((d, i) => <Column key={d.date} d={d} active={i === 2} />)}
      </div>
      <div className="ml-[13px] mt-[81px] flex h-[58px] w-[644px] shrink-0 items-center gap-[5.8px] bg-[#2a2a2a] pl-[13px] font-['Liberation_Sans',sans-serif] text-[21.33px] text-white">
        {styles.map((s, i) => (
          <label key={s} className="flex items-center gap-[7px]">
            <input
              type="radio"
              name="style"
              defaultChecked={i === 0}
              className="mb-[5px] h-4 w-4 appearance-none rounded-full bg-white checked:border-[3px] checked:border-[#0b6cff]"
            />
            <span>{s}</span>
          </label>
        ))}
      </div>
      <div className="relative ml-[14px] mt-[22px] h-[586px] w-[2544px] shrink-0">
        <MapArt />
        <div className="absolute right-[13px] top-[13px] flex h-[48px] w-[320px] items-center rounded-[6px] bg-white pl-[9px]">
          <svg viewBox="0 0 18 18" width="26" height="26" fill="#757575">
            <path d="M7.4 2.5c-2.7 0-4.9 2.2-4.9 4.9s2.2 4.9 4.9 4.9c1 0 1.8-.2 2.5-.8l3.700 3.700c.2.2.4.3.8.3.7 0 1.100-.4 1.100-1.100 0-.3-.1-.5-.3-.8L11.400 10c.4-.8.8-1.600.8-2.500.1-2.800-2.100-5-4.800-5zm0 1.600c1.800 0 3.200 1.400 3.200 3.200s-1.400 3.200-3.200 3.200-3.300-1.400-3.300-3.100 1.400-3.300 3.300-3.300z" />
          </svg>
          <input
            placeholder="Search"
            readOnly
            className="ml-[10px] w-[262px] bg-transparent text-[19.5px] outline-none placeholder:text-[#757575]"
          />
        </div>
      </div>
      <div className="mt-[2px] flex-1 bg-black" />
    </div>
  );
}
